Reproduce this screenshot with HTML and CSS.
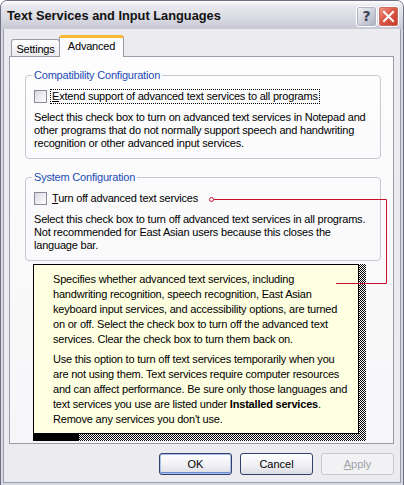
FILE: index.html
```html
<!DOCTYPE html>
<html>
<head>
<meta charset="utf-8">
<title>Text Services and Input Languages</title>
<link rel="stylesheet" href="styles.css">
</head>
<body>
<div class="screen">
  <div class="window">
    <div class="titlebar">
      <span class="title">Text Services and Input Languages</span>
      <div class="caption-btns">
        <span class="cap-btn help">?</span>
        <span class="cap-btn close">
          <svg width="13" height="13" viewBox="0 0 13 13"><path d="M2 2 L11 11 M11 2 L2 11" stroke="#fff" stroke-width="2" stroke-linecap="square"/></svg>
        </span>
      </div>
    </div>
    <div class="client">
      <div class="tabs">
        <div class="tab">Settings</div>
        <div class="tab active">Advanced</div>
      </div>
      <div class="panel">
        <fieldset class="group">
          <legend>Compatibility Configuration</legend>
          <div class="check-row">
            <span class="checkbox"></span>
            <span class="label focus"><u>E</u>xtend support of advanced text services to all programs</span>
          </div>
          <p class="desc">Select this check box to turn on advanced text services in Notepad and<br>other programs that do not normally support speech and handwriting<br>recognition or other advanced input services.</p>
        </fieldset>
        <fieldset class="group group2">
          <legend>System Configuration</legend>
          <div class="check-row">
            <span class="checkbox"></span>
            <span class="label"><u>T</u>urn off advanced text services</span>
          </div>
          <p class="desc">Select this check box to turn off advanced text services in all programs.<br>Not recommended for East Asian users because this closes the<br>language bar.</p>
        </fieldset>
      </div>
      <div class="buttons">
        <button class="btn default">OK</button>
        <button class="btn">Cancel</button>
        <button class="btn disabled"><u>A</u>pply</button>
      </div>
    </div>
  </div>

  <div class="tooltip">
    <p>Specifies whether advanced text services, including<br>handwriting recognition, speech recognition, East Asian<br>keyboard input services, and accessibility options, are turned<br>on or off. Select the check box to turn off the advanced text<br>services. Clear the check box to turn them back on.</p>
    <p>Use this option to turn off text services temporarily when you<br>are not using them. Text services require computer resources<br>and can affect performance. Be sure only those languages and<br>text services you use are listed under <b>Installed services</b>.<br>Remove any services you don't use.</p>
    <span class="shadow-right"></span>
    <span class="shadow-bottom"><span class="shadow-black"></span></span>
  </div>

  <svg class="callout" width="404" height="485" viewBox="0 0 404 485">
    <circle cx="211.5" cy="199.5" r="2" fill="none" stroke="#c8102e" stroke-width="1"/>
    <path d="M214 199.5 H386.5 V283.5 H336" fill="none" stroke="#c8102e" stroke-width="1"/>
  </svg>
</div>
</body>
</html>
```

FILE: styles.css
```css
html, body {
  margin: 0;
  padding: 0;
  overflow: hidden;
  background: #ffffff;
}

.screen {
  position: relative;
  width: 404px;
  height: 485px;
  font-family: "Liberation Sans", Arial, sans-serif;
  font-size: 11px;
  letter-spacing: -0.2px;
  color: #000;
}

.window {
  box-sizing: border-box;
  width: 404px;
  height: 486px;
  border: 1px solid #707084;
  border-radius: 7px 7px 0 0;
  background: #d8d8e2;
  display: flex;
  flex-direction: column;
}

.titlebar {
  height: 28px;
  flex: none;
  display: flex;
  align-items: center;
  justify-content: space-between;
  padding: 0 4px 0 6px;
  border-radius: 6px 6px 0 0;
  background: linear-gradient(#fdfdfe 0%, #e8e8ee 18%, #dcdce4 55%, #c9c9d5 100%);
}

.title {
  font-weight: bold;
  font-size: 12.8px;
  color: #111;
  letter-spacing: 0;
}

.caption-btns {
  display: flex;
  gap: 1px;
  margin-top: 2px;
}

.cap-btn {
  box-sizing: border-box;
  width: 21px;
  height: 21px;
  border: 1px solid #fff;
  border-radius: 3px;
  display: flex;
  align-items: center;
  justify-content: center;
}

.help {
  background: linear-gradient(135deg, #f4f4f8 0%, #d0d2dc 50%, #a8acbc 100%);
  color: #3c4458;
  font-weight: bold;
  font-size: 14px;
  letter-spacing: 0;
  font-family: "DejaVu Sans", sans-serif;
  box-shadow: inset 0 0 0 1px #b0b4c4;
}

.close {
  background: linear-gradient(135deg, #f0a090 0%, #dc5848 45%, #c83828 100%);
  box-shadow: inset 0 0 0 1px #c86a60;
}

.client {
  flex: 1;
  margin: 0 2px 2px;
  border: 1px solid #9c9cb0;
  border-top: none;
  background: #ecebf0;
  padding: 6px 6px 0 5px;
  display: flex;
  flex-direction: column;
}

.tabs {
  display: flex;
  align-items: flex-end;
  height: 22px;
  margin: 0 0 -1px 2px;
  position: relative;
  z-index: 1;
}

.tab {
  box-sizing: border-box;
  height: 17px;
  width: 49px;
  margin-bottom: 1px;
  border: 1px solid #9a9aa8;
  border-bottom: none;
  border-radius: 3px 3px 0 0;
  background: linear-gradient(#ffffff, #ececf0);
  text-align: center;
  line-height: 16px;
  padding-top: 1px;
}

.tab.active {
  width: 65px;
  height: 22px;
  margin-bottom: 0;
  margin-left: -1px;
  border-top: 3px solid #f8b830;
  background: #fcfcfe;
  line-height: 17px;
  padding-top: 0;
}

.panel {
  box-sizing: border-box;
  height: 388px;
  border: 1px solid #9a9aa8;
  background: linear-gradient(#fdfdfe, #f6f6f8);
  padding: 11px 12px 0 15px;
}

.group {
  margin: 0;
  border: 1px solid #c8c8d2;
  border-radius: 4px;
  padding: 7px 8px 8px 8px;
  min-width: 0;
}

.group2 {
  margin-top: 11px;
}

legend {
  color: #1c4cb4;
  padding: 0 2px;
  margin-left: -2px;
  line-height: 14px;
}

.check-row {
  display: flex;
  align-items: center;
  height: 15px;
}

.checkbox {
  box-sizing: border-box;
  width: 13px;
  height: 13px;
  border: 1px solid #8a8a9c;
  background: linear-gradient(135deg, #d8d8e0 0%, #f0f0f4 60%, #ffffff 100%);
  flex: none;
}

.label {
  margin-left: 3px;
  padding: 0 1px;
  line-height: 13px;
  border: 1px dotted transparent;
}

.label.focus {
  border-color: #000;
}

.desc {
  margin: 7px 0 0;
  line-height: 13px;
  white-space: nowrap;
}

.buttons {
  display: flex;
  justify-content: flex-end;
  gap: 8px;
  margin-top: 9px;
  padding-right: 0;
}

.btn {
  box-sizing: border-box;
  width: 73px;
  height: 22px;
  border: 1px solid #34406a;
  border-radius: 3px;
  background: linear-gradient(#ffffff 0%, #f2f2f6 50%, #dcdce4 100%);
  font-family: "Liberation Sans", Arial, sans-serif;
  font-size: 11px;
  color: #000;
  padding: 0;
}

.btn.default {
  box-shadow: inset 0 0 0 1px #a8c0ec, inset 0 -1px 0 1px #6c8cd4;
}

.btn.disabled {
  border-color: #c8c8d0;
  color: #a0a0a8;
  background: #f2f2f4;
}

.tooltip {
  position: absolute;
  left: 33px;
  top: 264px;
  box-sizing: border-box;
  width: 326px;
  height: 170px;
  border: 1px solid #000;
  background: #ffffe1;
  padding: 7px 4px 0 19px;
}

.tooltip p {
  margin: 0 0 5px;
  line-height: 15px;
  white-space: nowrap;
}

.shadow-right {
  position: absolute;
  left: 325px;
  top: -1px;
  width: 7px;
  height: 177px;
  background: repeating-conic-gradient(#000 0 25%, #fff 0 50%) 0 0 / 2px 2px;
}

.shadow-bottom {
  position: absolute;
  left: -1px;
  top: 169px;
  width: 333px;
  height: 7px;
  background: repeating-conic-gradient(#000 0 25%, #fff 0 50%) 0 0 / 2px 2px;
}

.shadow-black {
  display: block;
  width: 46px;
  height: 7px;
  background: #000;
}

.callout {
  position: absolute;
  left: 0;
  top: 0;
  pointer-events: none;
}
```
